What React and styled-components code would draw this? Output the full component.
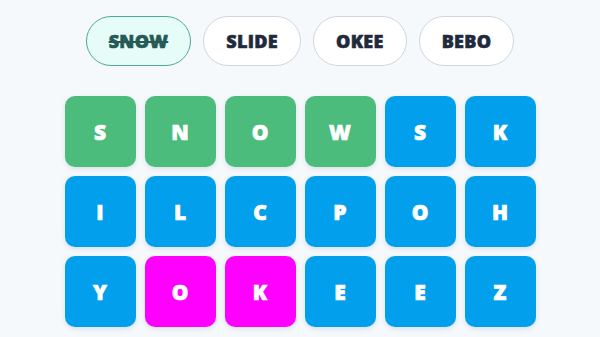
import React from "react";
import styled, { createGlobalStyle } from "styled-components";

const Global = createGlobalStyle`
  html, body { margin: 0; padding: 0; background: #f5f9fc; }
  body { font-family: "Open Sans", "Noto Sans", sans-serif; }
`;

const Page = styled.div`
  width: 600px;
  height: 337px;
  overflow: hidden;
  display: flex;
  flex-direction: column;
  align-items: center;
  padding-top: 16px;
  box-sizing: border-box;
`;

const Words = styled.div`
  display: flex;
  gap: 12px;
  justify-content: center;
`;

const Chip = styled.div`
  height: 50px;
  box-sizing: border-box;
  padding: 0 22px;
  display: flex;
  align-items: center;
  border-radius: 25px;
  border: 1px solid ${(p) => (p.$found ? "#4fa89a" : "#cfd6e0")};
  background: ${(p) => (p.$found ? "#e6fcf8" : "#ffffff")};
  color: ${(p) => (p.$found ? "#255a55" : "#1f2a3c")};
  font-size: 18px;
  font-weight: 800;
  letter-spacing: 0.3px;
  -webkit-text-stroke: 0.6px currentColor;
  text-decoration: ${(p) => (p.$found ? "line-through" : "none")};
  text-decoration-thickness: 2px;
`;

const Grid = styled.div`
  margin-top: 30px;
  display: grid;
  grid-template-columns: repeat(6, 71px);
  grid-auto-rows: 71px;
  gap: 9px;
`;

const colors = {
  g: "#4bbc7b",
  b: "#019fec",
  m: "#ff00ff",
};

const Tile = styled.div`
  border-radius: 10px;
  background: ${(p) => colors[p.$c]};
  color: #fff;
  display: flex;
  align-items: center;
  justify-content: center;
  font-size: 21px;
  font-weight: 800;
  -webkit-text-stroke: 0.7px #fff;
  box-shadow: 0 2px 5px rgba(30, 50, 80, 0.12);
`;

const rows = [
  ["S", "N", "O", "W", "S", "K"],
  ["I", "L", "C", "P", "O", "H"],
  ["Y", "O", "K", "E", "E", "Z"],
];
const colorRows = [
  ["g", "g", "g", "g", "b", "b"],
  ["b", "b", "b", "b", "b", "b"],
  ["b", "m", "m", "b", "b", "b"],
];

export default function App() {
  return (
    <>
      <Global />
      <Page>
        <Words>
          <Chip $found>SNOW</Chip>
          <Chip>SLIDE</Chip>
          <Chip>OKEE</Chip>
          <Chip>BEBO</Chip>
        </Words>
        <Grid>
          {rows.flatMap((r, i) =>
            r.map((l, j) => (
              <Tile key={`${i}-${j}`} $c={colorRows[i][j]}>
                {l}
              </Tile>
            ))
          )}
        </Grid>
      </Page>
    </>
  );
}
